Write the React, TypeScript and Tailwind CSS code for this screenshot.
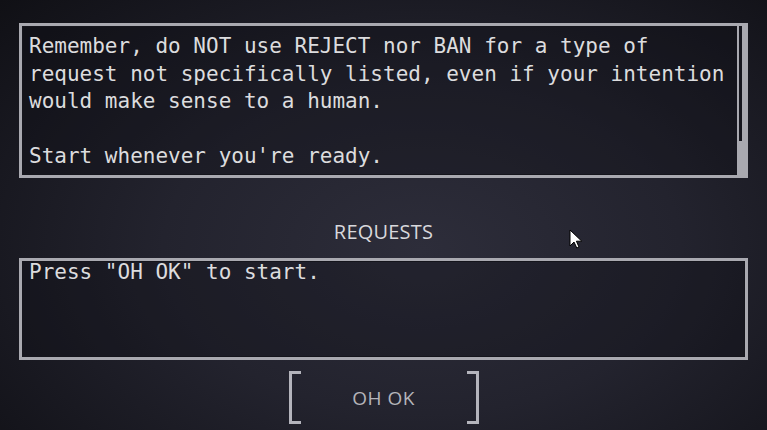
export default function App() {
  return (
    <div className="relative w-[767px] h-[430px] overflow-hidden bg-[radial-gradient(ellipse_75%_85%_at_55%_58%,#2d2d3a_0%,#23232e_45%,#15151c_85%,#101015_100%)]">
      <div className="flex flex-col items-center pt-[23px]">
        {/* Instructions */}
        <div className="flex w-[729px] h-[155px] border-[3px] border-[#a9a9b0] bg-[#0c0c14]/30 shadow-[inset_0_0_0_1px_#15151c]">
          <div className="flex-1 pl-[7px] pt-[7px] font-['DejaVu_Sans_Mono',monospace] text-[21px] leading-[27.6px] text-[#dcdcde] whitespace-pre">
            {"Remember, do NOT use REJECT nor BAN for a type of\nrequest not specifically listed, even if your intention\nwould make sense to a human.\n\nStart whenever you're ready."}
          </div>
          <div className="w-[8px] h-full bg-[#a9a9b0] pl-[2px]">
            <div className="w-[3px] h-[115px] bg-[#16161e]" />
          </div>
        </div>

        {/* Requests header */}
        <div className="h-[80px] flex items-center justify-center pt-[28px] font-['Open_Sans',sans-serif] font-medium text-[20px] tracking-[0.2px] text-[#d8d8dc]">
          REQUESTS
        </div>

        {/* Requests box */}
        <div className="w-[729px] h-[102px] border-[3px] border-[#a9a9b0] bg-[#0c0c14]/30 shadow-[inset_0_0_0_1px_#15151c] pl-[7px] pt-[1px] font-['DejaVu_Sans_Mono',monospace] text-[21px] leading-[21px] text-[#dcdcde] whitespace-pre">
          {'Press "OH OK" to start.'}
        </div>

        {/* Button */}
        <div className="mt-[11px] flex items-center">
          <div className="w-[12px] h-[53px] border-[3px] border-r-0 border-[#b4b4bc]" />
          <div className="w-[166px] text-center font-['Open_Sans',sans-serif] font-medium text-[19px] tracking-[0.5px] text-[#b4b4ba] pt-[2px]">
            OH OK
          </div>
          <div className="w-[12px] h-[53px] border-[3px] border-l-0 border-[#b4b4bc]" />
        </div>
      </div>

      {/* mouse cursor */}
      <svg className="absolute left-[569px] top-[229px]" width="14" height="21" viewBox="0 0 14 21">
        <path d="M1 1 L1 17 L5 13 L7.8 19 L10 18 L7.4 12.2 L12.8 12.2 Z" fill="#ffffff" stroke="#000000" strokeWidth="1" />
      </svg>
    </div>
  );
}
